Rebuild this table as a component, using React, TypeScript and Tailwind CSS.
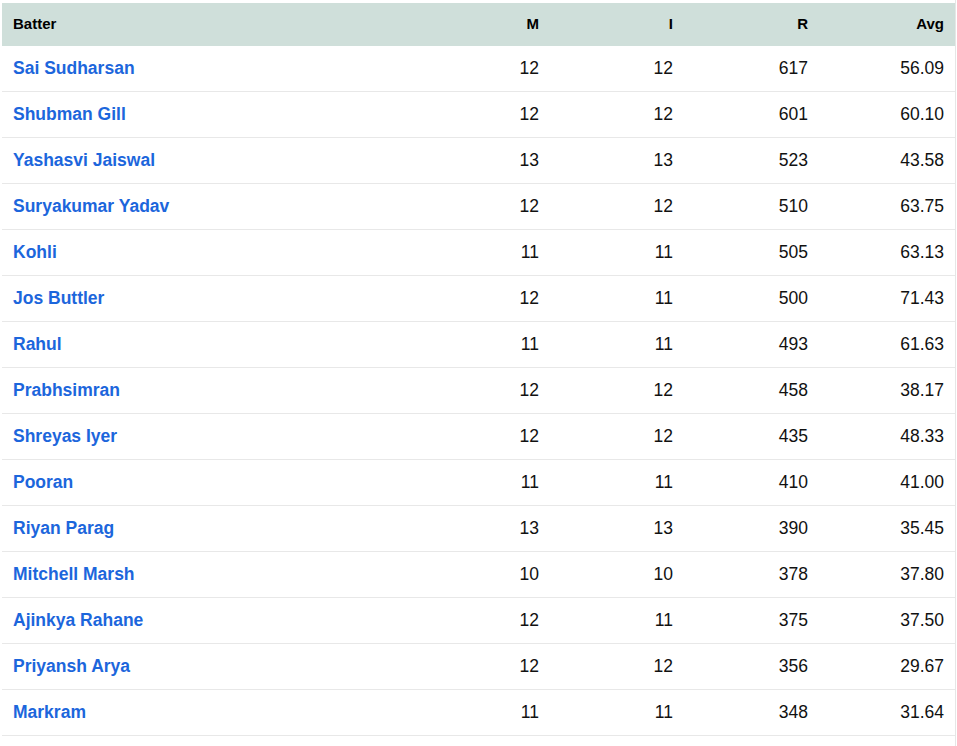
const rows = [
  ["Sai Sudharsan", "12", "12", "617", "56.09"],
  ["Shubman Gill", "12", "12", "601", "60.10"],
  ["Yashasvi Jaiswal", "13", "13", "523", "43.58"],
  ["Suryakumar Yadav", "12", "12", "510", "63.75"],
  ["Kohli", "11", "11", "505", "63.13"],
  ["Jos Buttler", "12", "11", "500", "71.43"],
  ["Rahul", "11", "11", "493", "61.63"],
  ["Prabhsimran", "12", "12", "458", "38.17"],
  ["Shreyas Iyer", "12", "12", "435", "48.33"],
  ["Pooran", "11", "11", "410", "41.00"],
  ["Riyan Parag", "13", "13", "390", "35.45"],
  ["Mitchell Marsh", "10", "10", "378", "37.80"],
  ["Ajinkya Rahane", "12", "11", "375", "37.50"],
  ["Priyansh Arya", "12", "12", "356", "29.67"],
  ["Markram", "11", "11", "348", "31.64"],
]

const cols = "grid grid-cols-[414px_134px_134px_135px_136px] items-center"

export default function App() {
  return (
    <div className="min-h-screen bg-white font-['Liberation_Sans',Arial,sans-serif]">
      <div className="w-[956px] border-r border-[#e6e6e6] pl-[2px] pt-[3px] pb-[10px]">
        <div className="w-[953px]">
          <div className={`${cols} h-[43px] bg-[#cfdfda] text-[15px] font-bold text-black`}>
            <div className="px-[11px] text-left">Batter</div>
            <div className="px-[11px] text-right">M</div>
            <div className="px-[11px] text-right">I</div>
            <div className="px-[11px] text-right">R</div>
            <div className="px-[11px] text-right">Avg</div>
          </div>
          {rows.map(([name, m, i, r, avg]) => (
            <div key={name} className={`${cols} h-[46px] border-b border-[#e8e8e8] text-[17.5px] text-[#111]`}>
              <div className="px-[11px] font-bold text-[#1c66dc]">{name}</div>
              <div className="px-[11px] text-right">{m}</div>
              <div className="px-[11px] text-right">{i}</div>
              <div className="px-[11px] text-right">{r}</div>
              <div className="px-[11px] text-right">{avg}</div>
            </div>
          ))}
        </div>
      </div>
    </div>
  )
}
